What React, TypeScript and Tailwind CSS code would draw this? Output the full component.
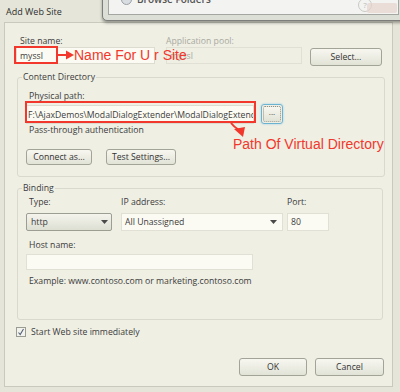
import React from 'react';

// Small helpers for the Windows 7 style controls
function Btn({ w, h = 18, children, className = '' }: { w: number; h?: number; children: React.ReactNode; className?: string }) {
  return (
    <div
      className={`flex items-center justify-center rounded-[3px] border border-[#a3a498] bg-gradient-to-b from-[#f7f7f0] to-[#e2e3d7] text-[#333] ${className}`}
      style={{ width: w, height: h }}
    >
      {children}
    </div>
  );
}

function Caret({ className = '' }: { className?: string }) {
  return (
    <svg width="7" height="4" viewBox="0 0 7 4" className={className}>
      <path d="M0 0 H7 L3.5 4 Z" fill="#4a4a4a" />
    </svg>
  );
}

function BrowseWindow() {
  return (
    <div className="absolute left-[102px] top-[-12px] h-[33px] w-[304px] rounded-bl-[5px] border border-[#7c7e7b] bg-[#dcdfd6] shadow-[0_2px_3px_rgba(0,0,0,0.35)]">
      <div className="ml-[5px] mr-[6px] flex h-[26px] items-end border border-[#a4a6a2] bg-[#f3f3f1]">
        <div className="mb-[9px] ml-[12px] flex items-center gap-[5px]">
          <div className="h-[11px] w-[11px] rounded-full border border-[#9aa0a6] bg-[#d8dde2]" />
          <span className="text-[10px] font-semibold text-[#555]">Browse Folders</span>
        </div>
        <div className="ml-auto mb-[2px] mr-[26px] flex h-[14px] w-[14px] items-center justify-center rounded-full border border-[#c9c9c6] text-[8px] text-[#b9b9b6]">?</div>
      </div>
      <div className="absolute right-[8px] top-[14px] h-[10px] w-[30px] rounded-[2px] bg-[#e6d2cc] opacity-70" />
    </div>
  );
}

export default function App() {
  return (
    <div className="relative h-[392px] w-[400px] overflow-hidden bg-[#e5e6d9] font-['Open_Sans',sans-serif] text-[8.7px] leading-[12px] text-[#3b3b3b]">
      <div className="h-[22px] pl-[6px] pt-[6px] text-[9px] text-[#2e2e2e]">Add Web Site</div>
      <BrowseWindow />

      {/* client panel */}
      <div className="ml-[4px] flex h-[365px] w-[389px] flex-col border border-[#c9cabd] bg-[#efefe4] pl-[11px] pt-[12px]">
        {/* site name / app pool */}
        <div className="flex h-[12px]">
          <div className="w-[150px] pl-[4px]">Site name:</div>
          <div className="text-[#a9aa9f]">Application pool:</div>
        </div>
        <div className="flex items-start">
          <div className="flex h-[17px] w-[139px] items-center border border-[#dcdcd0] bg-[#fbfbf3] pl-[3px]">myssl</div>
          <div className="ml-[11px] flex h-[17px] w-[136px] items-center border border-[#e0e0d5] pl-[3px] text-[#a9aa9f]">myssl</div>
          <Btn w={72} className="ml-[8px] mt-[1px]">Select...</Btn>
        </div>

        {/* content directory */}
        <div className="relative ml-[1px] mt-[11px] w-[368px] rounded-[3px] border border-[#d9dacd] pb-[11px] pl-[8px] pt-[12px]">
          <div className="absolute left-[4px] top-[-7px] bg-[#efefe4] px-[1px]">Content Directory</div>
          <div className="pl-[3px]">Physical path:</div>
          <div className="mt-[3px] flex items-center">
            <div className="flex h-[19px] w-[228px] items-center overflow-hidden whitespace-nowrap border border-[#dcdcd0] bg-[#fbfbf3] pl-[1px]">
              F:\AjaxDemos\ModalDialogExtender\ModalDialogExtender
            </div>
            <div className="ml-[7px] mt-[-1px] rounded-[3px] border border-[#6cb3d2] p-[1px] shadow-[0_0_2px_#8cc8e0]">
              <div className="flex h-[16px] w-[18px] items-start justify-center rounded-[2px] border border-dotted border-[#8e8f86] bg-gradient-to-b from-[#f7f7f0] to-[#e2e3d7] text-[8px] leading-[10px]">...</div>
            </div>
          </div>
          <div className="pl-[3px]">Pass-through authentication</div>
          <div className="mt-[13px] flex gap-[14px]">
            <Btn w={66} h={16}>Connect as...</Btn>
            <Btn w={70} h={16}>Test Settings...</Btn>
          </div>
        </div>

        {/* binding */}
        <div className="relative ml-[1px] mt-[11px] w-[366px] rounded-[3px] border border-[#d9dacd] pb-[32px] pl-[8px] pt-[7px]">
          <div className="absolute left-[4px] top-[-7px] bg-[#efefe4] px-[1px]">Binding</div>
          <div className="flex h-[12px]">
            <div className="w-[95px] pl-[3px]">Type:</div>
            <div className="w-[166px]">IP address:</div>
            <div>Port:</div>
          </div>
          <div className="mt-[5px] flex">
            <div className="flex h-[18px] w-[86px] items-center rounded-[2px] border border-[#9c9d93] bg-gradient-to-b from-[#f4f4ed] to-[#dedfd3] pl-[4px] pr-[3px]">
              <span>http</span>
              <Caret className="ml-auto" />
            </div>
            <div className="ml-[9px] flex h-[18px] w-[162px] items-center border border-[#e0e0d5] bg-[#fbfbf3] pl-[3px] pr-[5px]">
              <span>All Unassigned</span>
              <Caret className="ml-auto" />
            </div>
            <div className="ml-[4px] flex h-[18px] w-[42px] items-center border border-[#e0e0d5] bg-[#fbfbf3] pl-[3px]">80</div>
          </div>
          <div className="mt-[8px] pl-[3px]">Host name:</div>
          <div className="mt-[3px] h-[16px] w-[227px] border border-[#e0e0d5] bg-[#fbfbf3]" />
          <div className="mt-[5px] pl-[3px]">Example: www.contoso.com or marketing.contoso.com</div>
        </div>

        <div className="mt-[6px] flex items-center">
          <div className="flex h-[10px] w-[10px] items-center justify-center border border-[#9a9b92] bg-[#f2f3ec]">
            <svg width="8" height="8" viewBox="0 0 8 8">
              <path d="M1.5 4.5 L3.2 6.5 L6.5 1" fill="none" stroke="#55607a" strokeWidth="1.1" />
            </svg>
          </div>
          <span className="ml-[5px]">Start Web site immediately</span>
        </div>

        <div className="mt-[20px] flex justify-end gap-[8px] pr-[8px]">
          <Btn w={68}>OK</Btn>
          <Btn w={69}>Cancel</Btn>
        </div>
      </div>

      {/* red annotations drawn over the screenshot */}
      <svg className="pointer-events-none absolute left-0 top-0" width="400" height="392">
        <rect x="15" y="47" width="42" height="16" fill="none" stroke="#f2382c" strokeWidth="2" />
        <line x1="58" y1="55" x2="67" y2="55" stroke="#f2382c" strokeWidth="2" />
        <path d="M66 50.5 L74 55 L66 59.5 Z" fill="#f2382c" />
        <rect x="26" y="102" width="229" height="20" fill="none" stroke="#f2382c" strokeWidth="2" />
        <path d="M231 123 Q234 127 239 130" fill="none" stroke="#f2382c" strokeWidth="2" />
        <path d="M234 129 L245 127 L243 137 Z" fill="#f2382c" />
      </svg>
      <div className="pointer-events-none absolute left-[74px] top-[46px] font-['Liberation_Sans',Arial,sans-serif] text-[14px] leading-[18px] text-[#f2382c]">Name For U r Site</div>
      <div className="pointer-events-none absolute left-[233px] top-[135px] font-['Liberation_Sans',Arial,sans-serif] text-[14px] leading-[18px] text-[#f2382c]">Path Of Virtual Directory</div>
    </div>
  );
}
